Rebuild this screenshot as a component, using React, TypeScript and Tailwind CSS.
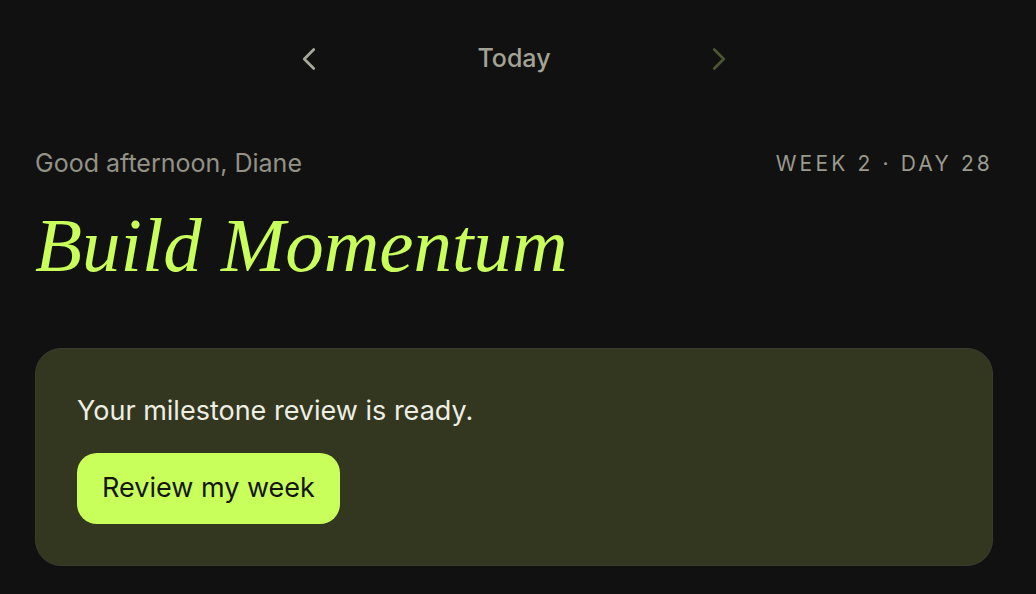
import { ChevronLeft, ChevronRight } from "lucide-react";

export default function App() {
  return (
    <div className="min-h-[594px] w-full bg-[#121111] pl-[35px] pr-[43px] pt-[39px] font-['Inter',sans-serif]">
      <div className="flex items-center justify-center">
        <div className="flex w-[451px] items-center justify-between">
          <button className="flex h-10 w-10 items-center justify-center text-[#a8a89a]">
            <ChevronLeft size={38} strokeWidth={1.7} />
          </button>
          <span className="text-[25px] font-medium text-[#a3a395]">Today</span>
          <button className="flex h-10 w-10 items-center justify-center text-[#4b5630]">
            <ChevronRight size={38} strokeWidth={1.7} />
          </button>
        </div>
      </div>

      <div className="mt-[66px] flex items-center justify-between">
        <p className="text-[25px] text-[#929287]">Good afternoon, Diane</p>
        <p className="text-[21px] tracking-[0.15em] text-[#9a9a8e]">WEEK 2 · DAY 28</p>
      </div>

      <h1 className="mt-[24px] font-['Liberation_Serif',serif] text-[77px] italic leading-none text-[#c8ff5a]">
        Build Momentum
      </h1>

      <div className="mt-[64px] rounded-[26px] border border-[#3a3b30] bg-[#333720] px-[41px] pt-[44px] pb-[41px]">
        <p className="text-[27px] leading-[36px] text-[#eeeee4]">Your milestone review is ready.</p>
        <button className="mt-[24px] h-[71px] w-[263px] rounded-[20px] bg-[#c8ff5a] text-[27px] text-[#151510]">
          Review my week
        </button>
      </div>
    </div>
  );
}
